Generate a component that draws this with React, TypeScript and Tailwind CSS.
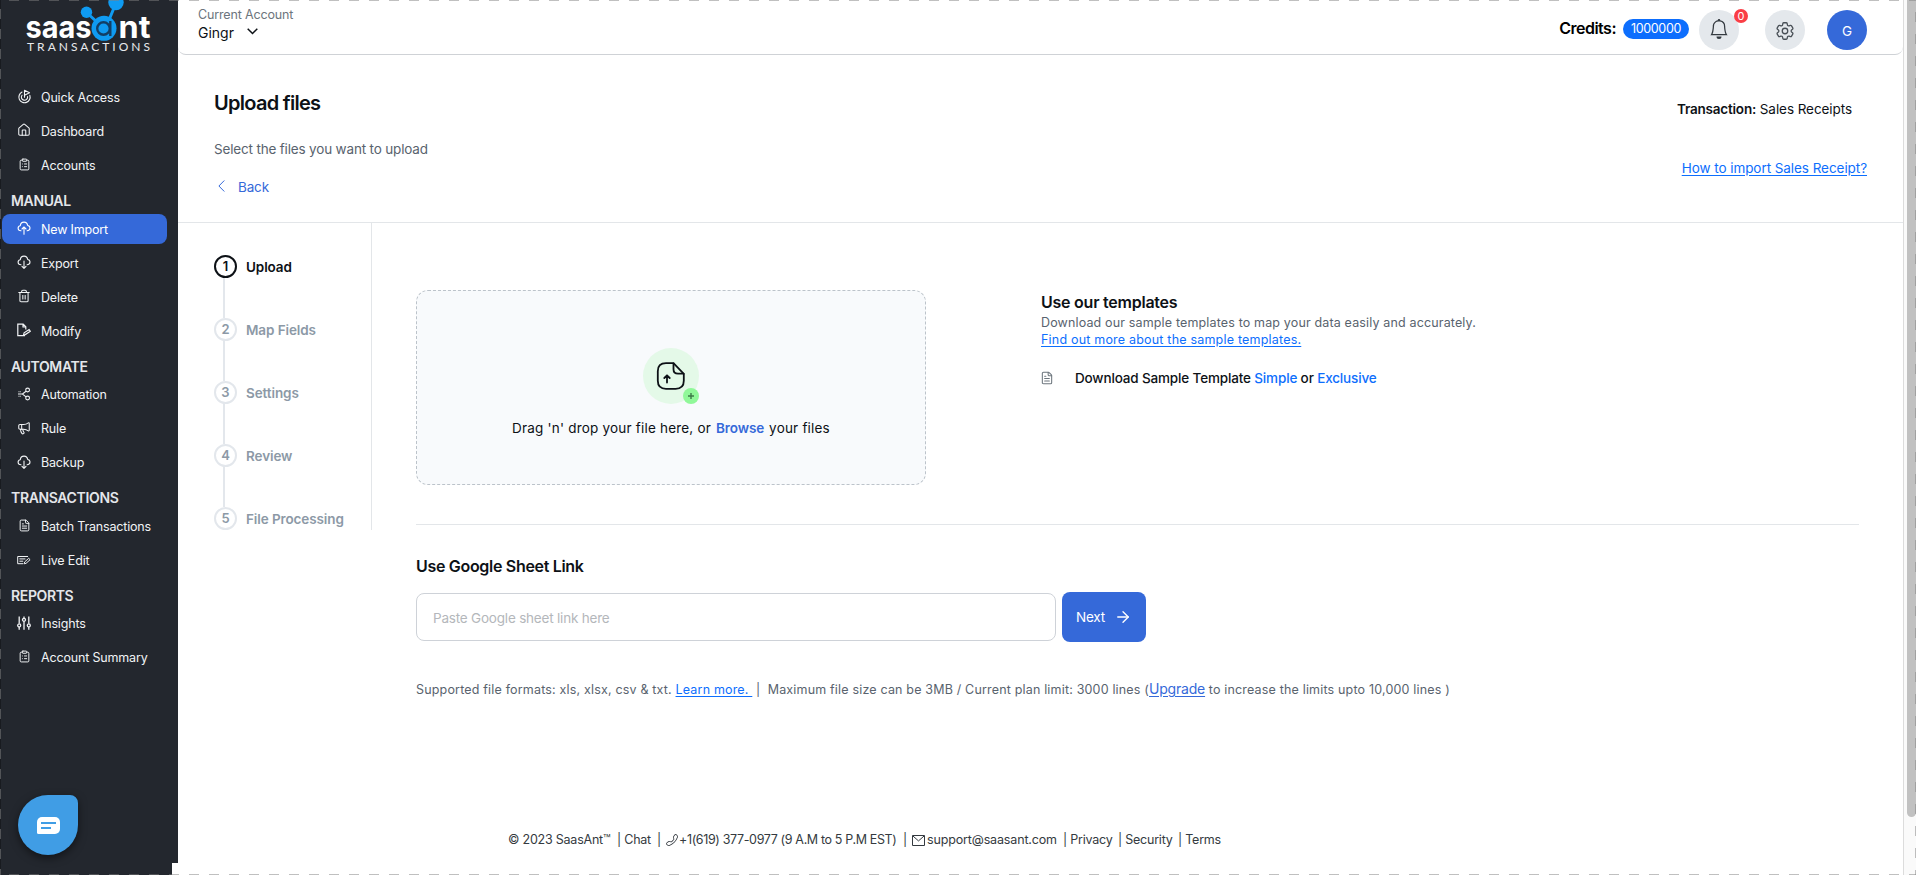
import { FunctionComponent, ReactNode } from "react";
import { ArrowRight, ClipboardList, FileText, Goal, House, Megaphone, Trash2 } from "lucide-react";
import { BsBell, BsTelephone } from "react-icons/bs";
import { HiOutlineCog6Tooth } from "react-icons/hi2";

type NavItem = {
  label: string;
  icon: ReactNode;
  active?: boolean;
};

type NavGroup = {
  title?: string;
  items: NavItem[];
};

const iconProps = { size: 14, strokeWidth: 1.8 };

const CloudIcon: FunctionComponent<{ up?: boolean }> = ({ up }) => (
  <svg
    width="14"
    height="14"
    viewBox="0 0 14 14"
    fill="none"
    stroke="currentColor"
    strokeWidth="1.1"
    strokeLinecap="round"
    strokeLinejoin="round"
  >
    <path d="M4 9.700C2.200 9.700 1.100 8.700 1.100 7.200c0-1.400.9-2.300 2.200-2.500C3.500 2.500 5 1.100 7 1.100c2.100 0 3.400 1.300 3.700 3.400 1.400.2 2.300 1.200 2.300 2.600 0 1.500-1.100 2.600-2.900 2.600" />
    {up ? <path d="M7 13.300V6.200M5 8l2-2 2 2" /> : <path d="M7 6v7.200M5 11.300l2 2 2-2" />}
  </svg>
);

const ModifyIcon = () => (
  <svg width="14" height="14" viewBox="0 0 14 14" fill="none" stroke="currentColor" strokeWidth="1.2">
    <path d="M8 12.600H.8V1.200h5.400l2.600 2.600v2.600M6 1.400V4h2.600" />
    <path d="M6.600 11.800l.5-2 5-3.200 1.200 1.600-5 3.400z" />
  </svg>
);

const AutomationIcon = () => (
  <svg width="14" height="14" viewBox="0 0 14 14" fill="none" stroke="currentColor" strokeWidth="1.1">
    <circle cx="10.600" cy="3" r="1.900" />
    <circle cx="10.600" cy="11" r="1.900" />
    <path d="M9 4.200L5.400 7 9 9.900M1 7h4.400" />
    <path d="M1.500 4.800h2.400M1.500 9.200h2.400" strokeDasharray="1 .7" />
  </svg>
);

const LiveEditIcon = () => (
  <svg width="14" height="14" viewBox="0 0 14 14" fill="none" stroke="currentColor" strokeWidth="1">
    <path d="M11 4.500H.7v7.200h5.600M2.400 6.900h6M2.400 9.200h3.800" />
    <path d="M7.200 11.800l.5-1.900 4-3.600 1.400 1.400-4 3.600z" />
  </svg>
);

const InsightsIcon = () => (
  <svg width="14" height="14" viewBox="0 0 14 14" fill="none" stroke="currentColor" strokeWidth="1.3">
    <path d="M2.200.4v7.200M2.200 11v2.800M7 .4v1.600M7 5.600v8.200M11.800.4v7.200M11.800 11v2.800" />
    <circle cx="2.200" cy="9.400" r="1.500" />
    <circle cx="7" cy="3.800" r="1.500" />
    <circle cx="11.800" cy="9.400" r="1.500" />
  </svg>
);

const MailIcon = () => (
  <svg width="13" height="11" viewBox="0 0 13 11" fill="none" stroke="currentColor" strokeWidth="1">
    <path d="M.5.5h12v10H.5zM.8.9l5.700 5 5.700-5" />
  </svg>
);

const UploadIcon = () => (
  <svg width="56" height="56" viewBox="0 0 56 56" fill="none" className="shrink-0">
    <circle cx="28" cy="28" r="28" fill="#e4f9e8" />
    <g stroke="#0d1116" strokeWidth="1.8" strokeLinecap="round" strokeLinejoin="round">
      <path d="M30.500 15.200H23c-5.200 0-8.200 3-8.200 8v9.600c0 5 3 8 8.200 8h9.600c5.200 0 8.200-3 8.200-8v-7z" />
      <path d="M30.500 15.400v5.800c0 3 1.500 4.500 4.500 4.500h5.600" />
      <path d="M24 34.500v-7m-2.700 2.500l2.700-2.700 2.700 2.700" />
    </g>
    <circle cx="48" cy="48" r="8" fill="#90f899" />
    <path d="M48 45v6M45 48h6" stroke="#3c7a48" strokeWidth="1.4" />
  </svg>
);

const groups: NavGroup[] = [
  {
    items: [
      { label: "Quick Access", icon: <Goal {...iconProps} size={15} /> },
      { label: "Dashboard", icon: <House {...iconProps} /> },
      { label: "Accounts", icon: <ClipboardList {...iconProps} size={13} /> },
    ],
  },
  {
    title: "MANUAL",
    items: [
      { label: "New Import", icon: <CloudIcon up />, active: true },
      { label: "Export", icon: <CloudIcon /> },
      { label: "Delete", icon: <Trash2 {...iconProps} /> },
      { label: "Modify", icon: <ModifyIcon /> },
    ],
  },
  {
    title: "AUTOMATE",
    items: [
      { label: "Automation", icon: <AutomationIcon /> },
      { label: "Rule", icon: <Megaphone {...iconProps} /> },
      { label: "Backup", icon: <CloudIcon /> },
    ],
  },
  {
    title: "TRANSACTIONS",
    items: [
      { label: "Batch Transactions", icon: <FileText {...iconProps} size={13} /> },
      { label: "Live Edit", icon: <LiveEditIcon /> },
    ],
  },
  {
    title: "REPORTS",
    items: [
      { label: "Insights", icon: <InsightsIcon /> },
      { label: "Account Summary", icon: <ClipboardList {...iconProps} size={13} /> },
    ],
  },
];

const steps = ["Upload", "Map Fields", "Settings", "Review", "File Processing"];

const Logo = () => (
  <svg width="178" height="56" viewBox="0 0 178 56">
    <g stroke="#0f9bf2" strokeWidth="3">
      <path d="M86 12l12 11M116 3l-7 17" />
    </g>
    <circle cx="86.500" cy="12.300" r="5.700" fill="#0f9bf2" />
    <circle cx="116" cy="2.500" r="7.700" fill="#0f9bf2" />
    <text x="25.500" y="38" textLength="66" lengthAdjust="spacingAndGlyphs" fill="#fff" fontFamily="Inter" fontWeight="700" fontSize="31">
      saas
    </text>
    <circle cx="104" cy="28.300" r="12.500" fill="#0f9bf2" />
    <circle cx="103.500" cy="28.500" r="6.300" fill="none" stroke="#123f66" strokeWidth="2.400" />
    <path d="M110.300 21v15" stroke="#123f66" strokeWidth="2.400" />
    <text x="118.500" y="38" textLength="32" lengthAdjust="spacingAndGlyphs" fill="#fff" fontFamily="Inter" fontWeight="700" fontSize="31">
      nt
    </text>
    <text x="27" y="51" textLength="123" fill="#e8eaed" fontFamily="Lato" fontSize="12">
      TRANSACTIONS
    </text>
  </svg>
);

const Sidebar: FunctionComponent = () => (
  <aside className="flex h-[863px] w-[178px] shrink-0 flex-col bg-[#23272e] text-[#f1f3f5]">
    <div className="h-[80.4px] shrink-0">
      <Logo />
    </div>
    {groups.map((group) => (
      <div key={group.title ?? "top"} className="flex flex-col">
        {group.title && (
          <h2 className="flex h-[29.6px] items-end pb-px pl-[11px] text-sm leading-5 font-semibold tracking-[-0.36px] text-[#e4e6ea]">
            {group.title}
          </h2>
        )}
        {group.items.map((item) => (
          <div key={item.label} className="flex h-[34px] items-center pr-[11px] pl-[2px]">
            <a
              className={`flex h-[30px] w-full items-center rounded-lg pl-[14px] text-[12.5px] tracking-[-0.17px] ${
                item.active ? "bg-[#3569d9] text-white" : ""
              }`}
            >
              <span className="mb-[2px] flex w-4 justify-center">{item.icon}</span>
              <span className="mt-[2px] ml-[9px] whitespace-nowrap">{item.label}</span>
            </a>
          </div>
        ))}
      </div>
    ))}
  </aside>
);

const Header: FunctionComponent = () => (
  <header className="flex h-[55px] justify-between rounded-b-lg border-b border-[#cfd2d6] pr-9 pl-5">
    <div className="flex flex-col pt-[5px]">
      <span className="text-[12.5px] leading-5 tracking-[-0.15px] text-[#6c757d]">Current Account</span>
      <span className="mt-[-2px] flex items-center gap-[13px] text-sm leading-5 text-[#0d1116]">
        Gingr
        <svg width="11" height="7" viewBox="0 0 11 7" fill="none" stroke="currentColor" strokeWidth="1.5" className="-mt-[3px]">
          <path d="M.7.7l4.800 4.800L10.300.7" />
        </svg>
      </span>
    </div>
    <div className="flex items-start pt-[10px]">
      <span className="pt-[6px] text-base leading-6 font-semibold tracking-[-0.5px] text-black">Credits:</span>
      <span className="mt-[9px] ml-[7px] flex h-5 w-[66px] items-center justify-center rounded-full bg-[#0d6efd] text-[12.5px] tracking-[-0.35px] text-white">
        1000000
      </span>
      <span className="relative ml-[10px] flex h-10 w-10 items-center justify-center rounded-full bg-[#e4e8ec] pb-[2px] text-[#343a40]">
        <BsBell size={20} />
        <span className="absolute -top-[1px] left-[35px] flex h-[14px] w-[14px] items-center justify-center rounded-full bg-[#fa3e45] text-[11px] text-white">
          0
        </span>
      </span>
      <span className="ml-[26px] flex h-10 w-10 items-center justify-center rounded-full bg-[#e4e8ec] pt-[2px] text-[#495057]">
        <HiOutlineCog6Tooth size={22} strokeWidth={1.4} />
      </span>
      <span className="ml-[22px] flex h-10 w-10 items-center justify-center rounded-full bg-[#3569d9] pt-[2px] text-[13.5px] text-white">
        G
      </span>
    </div>
  </header>
);

const TitleBar: FunctionComponent = () => (
  <section className="flex h-[168px] justify-between border-b border-[#e3e6e9] px-9">
    <div className="pt-[34px]">
      <h1 className="text-xl leading-7 font-semibold tracking-[-0.72px] text-[#0d1116]">Upload files</h1>
      <p className="mt-[22px] text-[13.5px] leading-5 tracking-[-0.17px] text-[#59636e]">
        Select the files you want to upload
      </p>
      <a className="mt-[18px] flex items-center text-[13.5px] leading-5 tracking-[-0.15px] text-[#3569d9]">
        <svg width="7" height="12" viewBox="0 0 7 12" fill="none" stroke="currentColor" className="-mt-[2px] ml-[4px]">
          <path d="M6.300.5L.9 6l5.400 5.500" />
        </svg>
        <span className="ml-[13px]">Back</span>
      </a>
    </div>
    <div className="flex flex-col items-end pt-[44px] text-[13.5px] leading-5">
      <p className="mr-[15px] tracking-[-0.07px] text-[#0d1116]">
        <b className="font-semibold tracking-[-0.2px]">Transaction:</b> Sales Receipts
      </p>
      <a className="mt-[39px] tracking-[-0.06px] text-[#0d6efd] underline underline-offset-2">How to import Sales Receipt?</a>
    </div>
  </section>
);

const Stepper: FunctionComponent = () => (
  <ol className="flex h-[307px] w-[194px] shrink-0 flex-col border-r border-[#e3e6e9] pt-8 pl-9">
    {steps.map((step, i) => (
      <li key={step} className={i < steps.length - 1 ? "flex h-[63px] gap-[9px]" : "flex gap-[9px]"}>
        <div className="flex w-[23px] flex-col">
          <span
            className={`flex h-[23px] w-[23px] shrink-0 items-center justify-center rounded-full border-2 text-[13px] font-semibold ${
              i === 0 ? "border-[#0d1116] text-[#0d1116]" : "border-[#e3e7ec] text-[#8c99a6]"
            }`}
          >
            {i + 1}
          </span>
          {i < steps.length - 1 && <span className="ml-[9px] w-[2px] grow bg-[#e3e7ec]" />}
        </div>
        <span
          className={`pt-[2px] text-[13.5px] leading-5 font-semibold tracking-[-0.1px] ${
            i === 0 ? "text-[#0d1116]" : "text-[#8c99a6]"
          }`}
        >
          {step}
        </span>
      </li>
    ))}
  </ol>
);

const Footer: FunctionComponent = () => (
  <footer className="mt-[130px] ml-[92px] flex items-center text-[12.5px] leading-5 tracking-[-0.22px] whitespace-pre text-[#343a40]">
    <span className="w-[109px]">© 2023 SaasAnt™</span>
    <span className="w-[40px]">| Chat</span>
    <span className="w-[9px]">|</span>
    <BsTelephone size={12} className="-scale-x-100" />
    <span className="ml-[1px] w-[224px] tracking-[-0.36px]">+1(619) 377-0977 (9 A.M to 5 P.M EST)</span>
    <span className="w-[9px]">|</span>
    <MailIcon />
    <span className="ml-[2px] w-[136px] tracking-[-0.15px]">support@saasant.com</span>
    <span className="w-[55px]">| Privacy</span>
    <span className="w-[60px]">| Security</span>
    <span>| Terms</span>
  </footer>
);

const Content: FunctionComponent = () => (
  <div className="grow pt-[67px] pl-[44px]">
    <div className="flex gap-[115px]">
      <div className="flex h-[195px] w-[510px] flex-col items-center rounded-xl border border-dashed border-[#bcc3ca] bg-[#f8fafc] pt-[57px]">
        <UploadIcon />
        <p className="mt-[14px] text-[13.5px] leading-5 tracking-[0.2px] whitespace-nowrap text-[#0d1116]">
          Drag 'n' drop your file here, or{" "}
          <a className="mx-[1px] font-semibold tracking-[-0.1px] text-[#3569d9]">Browse</a> your files
        </p>
      </div>
      <div className="text-[12.5px] tracking-[0.15px]">
        <h2 className="text-base leading-6 font-semibold tracking-[-0.24px] text-[#0d1116]">Use our templates</h2>
        <p className="leading-[17px] text-[#59636e]">
          Download our sample templates to map your data easily and accurately.
        </p>
        <a className="block leading-[17px] tracking-[0.2px] text-[#0d6efd] underline underline-offset-2">
          Find out more about the sample templates.
        </a>
        <p className="mt-5 flex items-center text-[13.5px] leading-5 font-medium tracking-[-0.15px] text-[#0d1116]">
          <FileText size={14} strokeWidth={1.8} className="mr-[21px] -ml-[1px] text-[#6c757d]" />
          <span>
            Download Sample Template <a className="text-[#0d6efd]">Simple</a> or <a className="text-[#0d6efd]">Exclusive</a>
          </span>
        </p>
      </div>
    </div>
    <hr className="mt-[39px] mr-[44px] border-[#e3e6e9]" />
    <h2 className="mt-[29px] text-base leading-6 font-semibold tracking-[-0.31px] text-[#0d1116]">Use Google Sheet Link</h2>
    <div className="mt-[14px] flex h-[50px] items-center gap-[6px]">
      <input
        className="h-12 w-[640px] rounded-lg border border-[#ced2d8] px-4 pt-[2px] text-[13.5px] tracking-[-0.2px] placeholder:text-[#b4b7bb]"
        placeholder="Paste Google sheet link here"
      />
      <button className="flex h-[50px] w-[84px] items-center justify-center gap-[9px] rounded-lg bg-[#3569d9] text-[13.5px] tracking-[-0.2px] text-white">
        Next <ArrowRight size={18} strokeWidth={1.8} />
      </button>
    </div>
    <p className="mt-[37px] text-[12.5px] leading-5 tracking-[0.175px] whitespace-pre text-[#59636e]">
      Supported file formats: xls, xlsx, csv & txt. <a className="text-[#0d6efd] underline underline-offset-2">Learn more. </a>
      {" |  "}Maximum file size can be 3MB / Current plan limit: 3000 lines (
      <a className="text-sm leading-5 tracking-[-0.2px] text-[#3569d9] underline underline-offset-2">Upgrade</a> to increase the
      limits upto 10,000 lines )
    </p>
    <Footer />
  </div>
);

const ChatButton: FunctionComponent = () => (
  <button className="absolute top-[795px] left-[18px] flex h-[60px] w-[60px] items-center justify-center rounded-[30px] rounded-tr-lg bg-[#409de5] shadow-[0_3px_8px_rgba(0,0,0,0.5)]">
    <svg width="23" height="17" viewBox="0 0 23 17">
      <path d="M5 0h13a5 5 0 0 1 5 5v7a5 5 0 0 1-5 5H1.500A1.500 1.500 0 0 1 0 15.500V5a5 5 0 0 1 5-5z" fill="#fff" />
      <path d="M4 6h15M4 11h10" stroke="#409de5" strokeWidth="2" />
    </svg>
  </button>
);

const App: FunctionComponent = () => {
  return (
    <div className="relative flex h-[875px] w-[1916px] overflow-hidden bg-white font-['Inter','Liberation_Sans',sans-serif]">
      <div className="shrink-0">
        <Sidebar />
        <div className="h-3 w-[172px] bg-[#23272e]" />
      </div>
      <main className="flex grow flex-col">
        <Header />
        <TitleBar />
        <div className="flex">
          <Stepper />
          <Content />
        </div>
      </main>
      <div className="w-[13px] shrink-0 border-l border-[#dcdcdc] bg-[#fafafa] pl-[3px]">
        <div className="h-[817px] w-[9px] rounded-b-full bg-[#c1c1c1]" />
      </div>
      <ChatButton />
      {/* dashed frame over the whole window */}
      <div className="pointer-events-none absolute inset-x-0 top-0 h-px bg-[repeating-linear-gradient(90deg,transparent_0_9px,rgba(128,128,128,0.5)_9px_19px,transparent_19px_20px)]" />
      <div className="pointer-events-none absolute inset-x-0 bottom-0 h-px bg-[repeating-linear-gradient(90deg,transparent_0_9px,rgba(128,128,128,0.5)_9px_19px,transparent_19px_20px)]" />
      <div className="pointer-events-none absolute inset-y-0 left-0 w-px bg-[repeating-linear-gradient(180deg,rgba(0,0,0,0.3)_0_9px,rgba(128,128,128,0.5)_9px_19px,rgba(0,0,0,0.3)_19px_20px)]" />
      <div className="pointer-events-none absolute inset-y-0 right-0 w-px bg-[repeating-linear-gradient(180deg,transparent_0_12px,rgba(128,128,128,0.5)_12px_22px)]" />
    </div>
  );
};

export default App;
